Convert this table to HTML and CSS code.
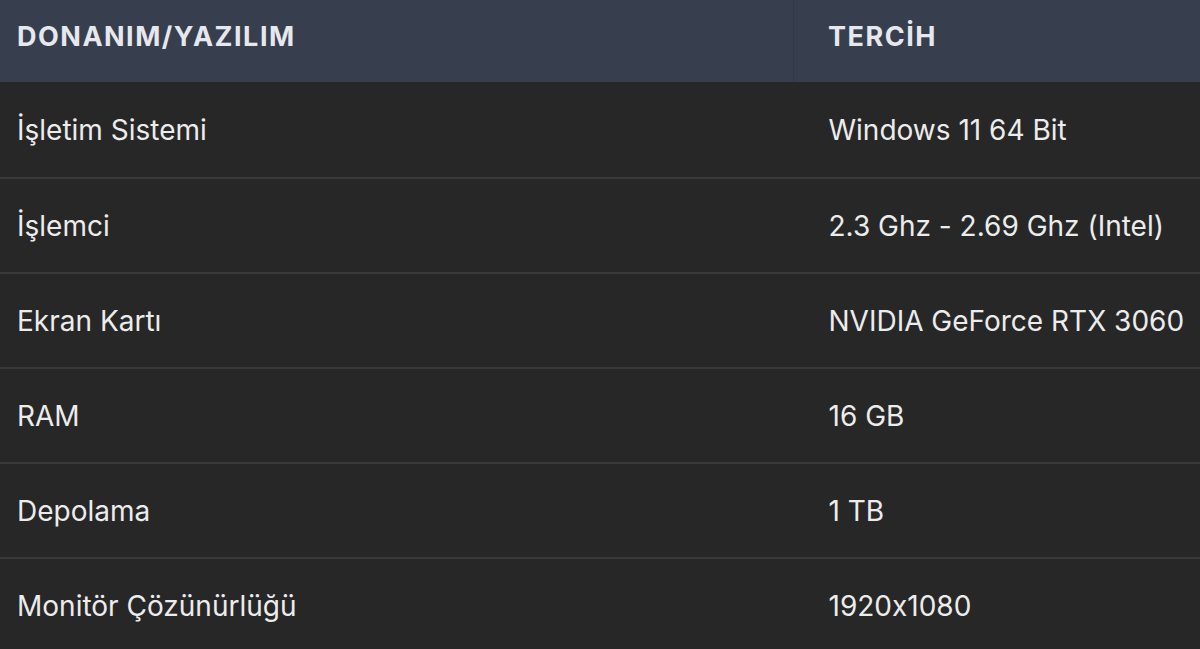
FILE: index.html
```html
<!DOCTYPE html>
<html lang="tr">
<head>
<meta charset="utf-8">
<link rel="stylesheet" href="styles.css">
</head>
<body>
<table class="spec">
  <thead>
    <tr><th class="c1">DONANIM/YAZILIM</th><th class="c2">TERCİH</th></tr>
  </thead>
  <tbody>
    <tr><td class="c1">İşletim Sistemi</td><td class="c2">Windows 11 64 Bit</td></tr>
    <tr><td class="c1">İşlemci</td><td class="c2">2.3 Ghz - 2.69 Ghz (Intel)</td></tr>
    <tr><td class="c1">Ekran Kartı</td><td class="c2">NVIDIA GeForce RTX 3060</td></tr>
    <tr><td class="c1">RAM</td><td class="c2">16 GB</td></tr>
    <tr><td class="c1">Depolama</td><td class="c2">1 TB</td></tr>
    <tr><td class="c1">Monitör Çözünürlüğü</td><td class="c2">1920x1080</td></tr>
  </tbody>
</table>
</body>
</html>
```
FILE: styles.css
```css
html, body {
  margin: 0;
  padding: 0;
  background: #272727;
  overflow: hidden;
}
.spec {
  width: 1200px;
  border-collapse: collapse;
  table-layout: fixed;
  font-family: Inter, "Noto Sans", sans-serif;
  font-feature-settings: "calt" 0;
  font-variant-ligatures: no-contextual;
  color: #ececec;
}
.spec th {
  height: 72px;
  background: #373f4f;
  text-align: left;
  font-weight: 700;
  font-size: 27px;
  letter-spacing: 1.5px;
  color: #e6e8ee;
  padding: 0 0 10px 0;
}
.spec th.c1 { width: 776px; padding-left: 17px; border-right: 1px solid #323946; }
.spec th.c2 { padding-left: 34px; }
.spec td {
  height: 93px;
  font-size: 28px;
  font-weight: 400;
  letter-spacing: 0;
  padding: 0;
  border-top: 2px solid #393939;
}
.spec td.c1 { padding-left: 17px; }
.spec td.c2 { padding-left: 35px; }
.spec tbody tr:first-child td { border-top: none; height: 95px; }
```
